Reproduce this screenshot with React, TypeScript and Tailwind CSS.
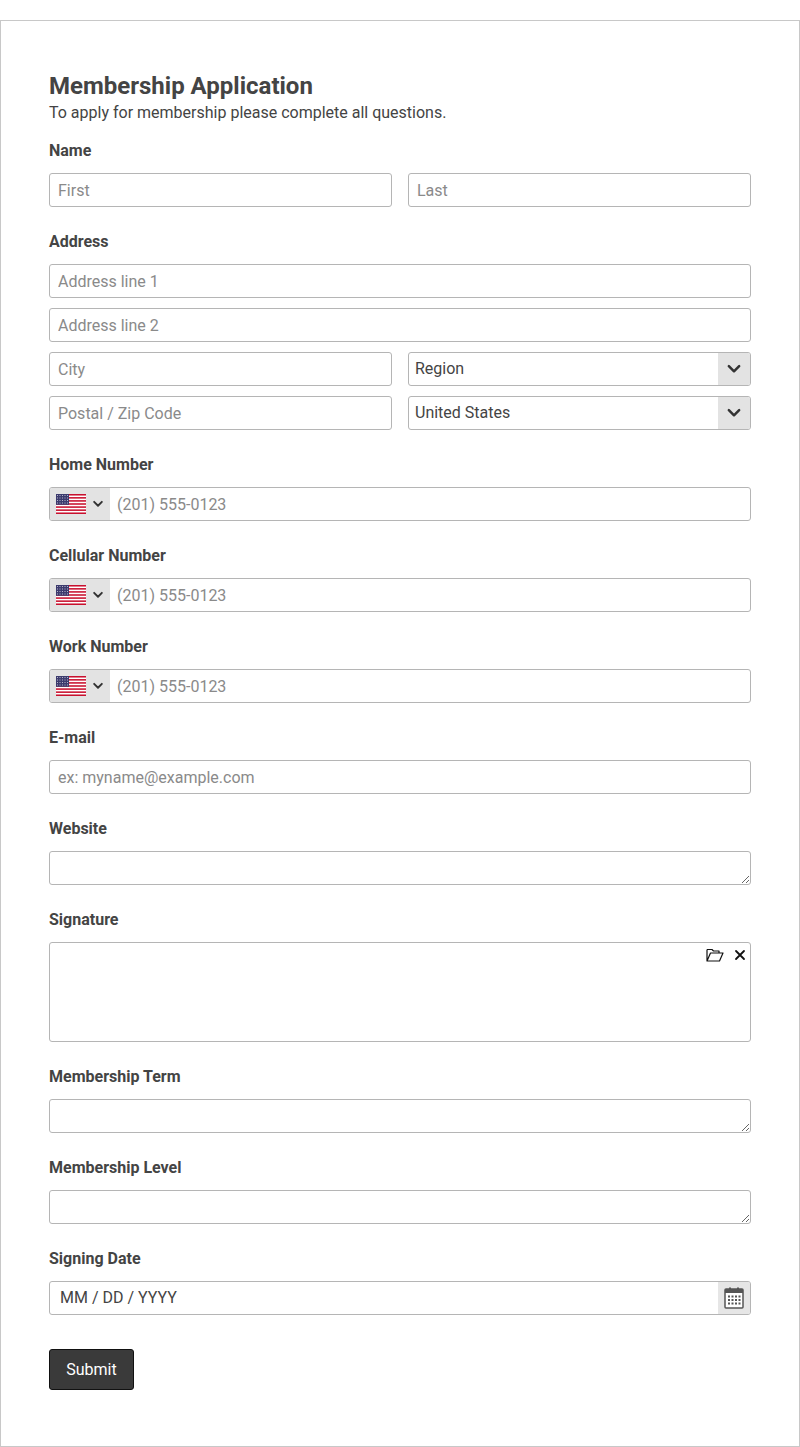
import React from "react";

const inp = "h-[34px] w-full border border-[#b5b5b5] rounded-[3px] px-[8px] text-[16px] text-[#444] placeholder:text-[#8a8a8a] outline-none bg-white";

function Label({ children }: { children: React.ReactNode }) {
  return <div className="text-[16px] leading-[20px] font-bold text-[#444] mb-[12px]">{children}</div>;
}

function Chevron({ size = 14 }: { size?: number }) {
  return (
    <svg width={size} height={size} viewBox="0 0 14 14" fill="none" stroke="#333" strokeWidth="2.2" strokeLinecap="round" strokeLinejoin="round">
      <path d="M2.5 4.5 L7 9 L11.5 4.5" />
    </svg>
  );
}

function Flag() {
  const stripes = [];
  for (let i = 0; i < 7; i++) {
    stripes.push(<rect key={i} x="0" y={i * (20 / 6.5)} width="30" height={20 / 13} fill="#c8102e" />);
  }
  return (
    <svg width="30" height="20" viewBox="0 0 30 20">
      <rect width="30" height="20" fill="#fff" />
      {stripes}
      <rect x="0" y="0" width="13" height="10.8" fill="#3c3b6e" />
      {[1.5, 4, 6.5, 9].map((y) =>
        [1.5, 4, 6.5, 9, 11.5].map((x) => <rect key={x + "-" + y} x={x - 0.4} y={y - 0.4} width="0.8" height="0.8" fill="#fff" />)
      )}
    </svg>
  );
}

function Select({ value }: { value: string }) {
  return (
    <div className="relative h-[34px] w-full border border-[#b5b5b5] rounded-[3px] bg-white flex items-center overflow-hidden">
      <span className="pl-[6px] text-[16px] text-[#444] flex-1">{value}</span>
      <div className="w-[32px] h-full bg-[#e3e3e3] flex items-center justify-center"><Chevron size={16} /></div>
    </div>
  );
}

function Phone() {
  return (
    <div className="h-[34px] w-full border border-[#b5b5b5] rounded-[3px] bg-white flex items-center overflow-hidden">
      <div className="w-[60px] h-full bg-[#e3e3e3] flex items-center pl-[6px] gap-[6px]">
        <Flag />
        <Chevron size={12} />
      </div>
      <input className="flex-1 h-full px-[7px] text-[16px] text-[#444] placeholder:text-[#8a8a8a] outline-none" placeholder="(201) 555-0123" />
    </div>
  );
}

function TextArea() {
  return <textarea className="block h-[34px] w-full border border-[#b5b5b5] rounded-[3px] bg-white outline-none resize-y" />;
}

function Field({ label, children }: { label: string; children: React.ReactNode }) {
  return (
    <div className="mb-[25px]">
      <Label>{label}</Label>
      {children}
    </div>
  );
}

export default function App() {
  return (
    <div className="bg-white pt-[20px]" style={{ fontFamily: "Roboto, 'Liberation Sans', sans-serif" }}>
      <div className="border border-[#c8c8c8] h-[1427px] px-[48px] pt-[51px]">
        <div className="text-[24px] leading-[28px] font-bold text-[#444]">Membership Application</div>
        <div className="text-[16px] leading-[20px] text-[#444] mt-[3px] mb-[18px]">To apply for membership please complete all questions.</div>
        <Field label="Name">
          <div className="grid grid-cols-2 gap-[16px]">
            <input className={inp} placeholder="First" />
            <input className={inp} placeholder="Last" />
          </div>
        </Field>
        <Field label="Address">
          <div className="flex flex-col gap-[10px]">
            <input className={inp} placeholder="Address line 1" />
            <input className={inp} placeholder="Address line 2" />
            <div className="grid grid-cols-2 gap-[16px]">
              <input className={inp} placeholder="City" />
              <Select value="Region" />
            </div>
            <div className="grid grid-cols-2 gap-[16px]">
              <input className={inp} placeholder="Postal / Zip Code" />
              <Select value="United States" />
            </div>
          </div>
        </Field>
        <Field label="Home Number"><Phone /></Field>
        <Field label="Cellular Number"><Phone /></Field>
        <Field label="Work Number"><Phone /></Field>
        <Field label="E-mail"><input className={inp} placeholder="ex: myname@example.com" /></Field>
        <Field label="Website"><TextArea /></Field>
        <Field label="Signature">
          <div className="relative h-[100px] border border-[#b5b5b5] rounded-[3px] bg-white">
            <div className="absolute right-[4px] top-[5px] flex items-center gap-[10px]">
              <svg width="18" height="14" viewBox="0 0 18 14" fill="none" stroke="#111" strokeWidth="1.2" strokeLinejoin="round">
                <path d="M1 1.5 H6 L7.5 3 H13 V5" />
                <path d="M1 1.5 V13 H13.5 L17 5 H4.5 L1 13" />
              </svg>
              <svg width="12" height="12" viewBox="0 0 12 12" stroke="#111" strokeWidth="1.8" strokeLinecap="round">
                <path d="M2 2 L10 10 M10 2 L2 10" />
              </svg>
            </div>
          </div>
        </Field>
        <Field label="Membership Term"><TextArea /></Field>
        <Field label="Membership Level"><TextArea /></Field>
        <Field label="Signing Date">
          <div className="h-[34px] w-full border border-[#b5b5b5] rounded-[3px] bg-white flex items-center overflow-hidden">
            <span className="flex-1 pl-[10px] text-[16px] text-[#444]">MM / DD / YYYY</span>
            <div className="w-[32px] h-full bg-[#e6e6e6] flex items-center justify-center">
              <svg width="20" height="22" viewBox="0 0 20 22">
                <rect x="1" y="2" width="18" height="19" rx="1" fill="#fff" stroke="#555" strokeWidth="1.5" />
                <rect x="1" y="2" width="18" height="4" fill="#555" />
                <rect x="5" y="0.5" width="2" height="3" fill="#555" />
                <rect x="13" y="0.5" width="2" height="3" fill="#555" />
                {[8.5, 12, 15.5].map((y) => [4, 7.5, 11, 14.5].map((x) => <rect key={x + "_" + y} x={x} y={y} width="2" height="2" fill="#555" />))}
              </svg>
            </div>
          </div>
        </Field>
        <button className="mt-[9px] h-[41px] w-[85px] bg-[#3a3a3a] text-white text-[16px] rounded-[3px] border border-[#111]">Submit</button>
      </div>
    </div>
  );
}
